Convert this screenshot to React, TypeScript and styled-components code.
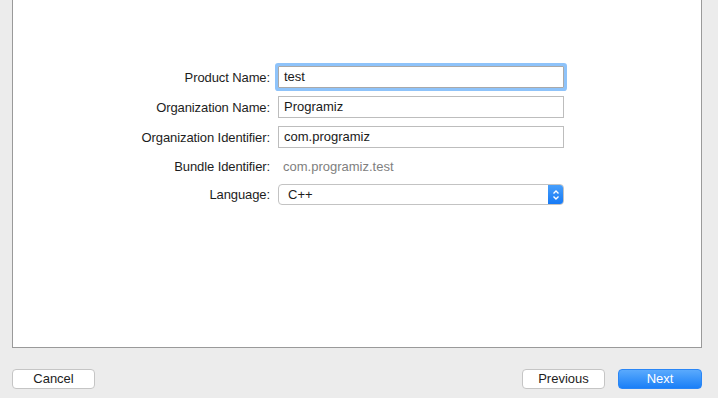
import styled, { createGlobalStyle } from 'styled-components'

const GlobalStyle = createGlobalStyle`
  html, body {
    margin: 0;
    padding: 0;
    background: #ececec;
  }
  body {
    font-family: 'Liberation Sans', Arial, sans-serif;
    font-size: 13px;
    color: #1d1d1d;
  }
`

const fields = [
  { label: 'Product Name:', value: 'test', focused: true },
  { label: 'Organization Name:', value: 'Programiz' },
  { label: 'Organization Identifier:', value: 'com.programiz' },
]

export default function App() {
  return (
    <>
      <GlobalStyle />
      <Window>
        <Panel>
          <Form>
            {fields.map((f) => (
              <Row key={f.label}>
                <Label>{f.label}</Label>
                <Input $focused={f.focused}>{f.value}</Input>
              </Row>
            ))}
            <Row $height={20}>
              <Label>Bundle Identifier:</Label>
              <Static>com.programiz.test</Static>
            </Row>
            <Row $height={21}>
              <Label>Language:</Label>
              <Select>
                <span>C++</span>
                <Stepper>
                  <svg width="8" height="12" viewBox="0 0 8 12">
                    <path d="M1.5 4.5 L4 2 L6.5 4.5" fill="none" stroke="#fff" strokeWidth="1.4" />
                    <path d="M1.5 7.5 L4 10 L6.5 7.5" fill="none" stroke="#fff" strokeWidth="1.4" />
                  </svg>
                </Stepper>
              </Select>
            </Row>
          </Form>
        </Panel>
        <Footer>
          <Button>Cancel</Button>
          <Spacer />
          <Button>Previous</Button>
          <Button $primary>Next</Button>
        </Footer>
      </Window>
    </>
  )
}

const Window = styled.div`
  width: 718px;
  height: 398px;
  padding: 0 16px 0 12px;
  box-sizing: border-box;
  display: flex;
  flex-direction: column;
`

const Panel = styled.section`
  height: 348px;
  box-sizing: border-box;
  background: #fff;
  border: 1px solid #9a9a9a;
  border-top: none;
  padding-top: 66px;
`

const Form = styled.div`
  display: flex;
  flex-direction: column;
  gap: 8px;
`

const Row = styled.div<{ $height?: number }>`
  display: grid;
  grid-template-columns: 257px 286px;
  column-gap: 8px;
  align-items: center;
  height: ${(p) => p.$height ?? 22}px;
`

const Label = styled.label`
  text-align: right;
  white-space: nowrap;
  letter-spacing: -0.1px;
`

const Input = styled.div<{ $focused?: boolean }>`
  height: 22px;
  box-sizing: border-box;
  border: 1px solid #bdbdbd;
  background: #fff;
  padding: 0 5px;
  line-height: 20px;
  font-size: 13px;
  color: #1a1a1a;
  ${(p) =>
    p.$focused &&
    `
    border-color: #a9a9a9;
    box-shadow: 0 0 0 3px #8ec3fa;
    border-radius: 1px;
  `}
`

const Static = styled.div`
  padding-left: 5px;
  color: #808080;
`

const Select = styled.div`
  height: 21px;
  box-sizing: border-box;
  border: 1px solid #c3c3c3;
  border-radius: 4px;
  background: #fff;
  display: flex;
  align-items: center;
  justify-content: space-between;
  padding-left: 9px;
  overflow: hidden;
`

const Stepper = styled.span`
  width: 16px;
  align-self: stretch;
  margin: -1px -1px -1px 0;
  background: linear-gradient(#4aa1fc, #1478f5);
  border-radius: 0 4px 4px 0;
  display: flex;
  align-items: center;
  justify-content: center;
`

const Footer = styled.footer`
  display: flex;
  align-items: flex-start;
  gap: 13px;
  padding-top: 21px;
`

const Spacer = styled.div`
  flex: 1;
`

const Button = styled.button<{ $primary?: boolean }>`
  width: ${(p) => (p.$primary ? 84 : 83)}px;
  height: 20px;
  box-sizing: border-box;
  border-radius: 4px;
  font-family: 'Liberation Sans', Arial, sans-serif;
  font-size: 13px;
  padding: 0;
  line-height: 18px;
  cursor: pointer;
  color: ${(p) => (p.$primary ? '#fff' : '#1d1d1d')};
  border: 1px solid ${(p) => (p.$primary ? '#2a86f6' : '#c5c5c5')};
  background: ${(p) => (p.$primary ? 'linear-gradient(#5aaafd, #1a7ff7)' : '#fff')};
`
